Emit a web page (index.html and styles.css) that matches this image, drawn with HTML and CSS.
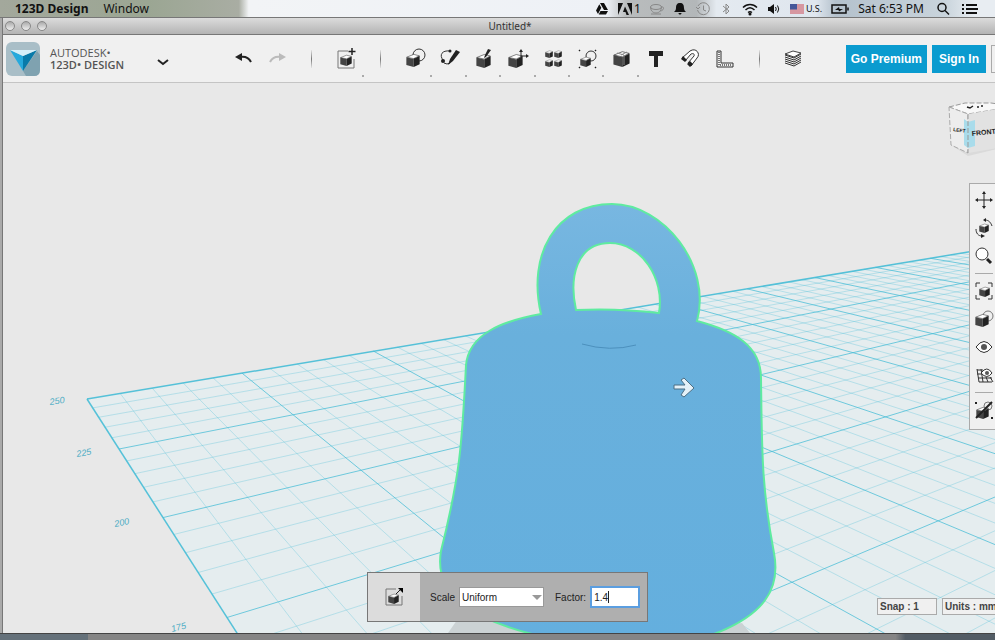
FILE: index.html
```html
<!DOCTYPE html>
<html lang="en">
  <head>
    <title>Untitled* - 123D Design</title>
    <meta charset="UTF-8" />
    <link rel="stylesheet" href="styles.css">
  </head>

  <body>
    <!-- shared shapes -->
    <svg class="defs" aria-hidden="true">
      <symbol id="cube" viewBox="0 0 20 20">
        <path d="M1 6 11 2l8 2-8 4z" fill="#fff" stroke="#333" stroke-width=".8"/>
        <path d="M.5 6 11 8.500V20L.5 17z" fill="#444"/>
        <path d="M11 8.500 19.500 4v12L11 20z" fill="#222"/>
      </symbol>
    </svg>

    <header class="menubar">
      <strong>123D Design</strong>
      <span>Window</span>
      <div class="status">
        <svg viewBox="0 0 14 14"><path d="M5 1h4l4 7h-4zM4.300 2.300l2 3.500L3 12 1 8.500zM5.500 9H13l-2 3.500H3.700z"/></svg>
        <span class="adobe"><svg viewBox="0 0 14 14"><path d="M0 1h5L0 13zM9 1h5v12zM7 4.500l4 8.500H8.500l-1-3H5z"/></svg>1</span>
        <svg viewBox="0 0 14 14" class="dim"><ellipse cx="6" cy="5" rx="5.500" ry="2.500"/><path d="M.5 5c0 3 2 6 5.500 6s5.500-3 5.500-6M11 5c4-1 3 4-1 4M1 12h10"/></svg>
        <svg viewBox="0 0 14 14"><path d="M7 1c3 0 4 2 4 5 0 2 1 3 2 4H1c1-1 2-2 2-4 0-3 1-5 4-5zM5.500 11h3c0 2-3 2-3 0z"/></svg>
        <svg viewBox="0 0 14 14" class="dim"><path d="M2 4a6 6 0 1 1-.5 4M0 5l2 2 2-2M7.500 3.500V8l2.500 1"/></svg>
        <svg viewBox="0 0 14 14" class="dim"><path d="M4 4l6 5-3 3V2l3 3-6 5"/></svg>
        <svg viewBox="0 0 16 14" class="wide line"><path d="M1 5.500c4-4 10-4 14 0M3.500 8c3-3 6-3 9 0M6 10.500c1.500-1 2.500-1 4 0"/><circle cx="8" cy="12" r=".8"/></svg>
        <svg viewBox="0 0 14 14"><path d="M1 5h2l4-3v10L3 9H1z"/><path d="M8.500 5q1.500 2 0 4M10.500 3.500q2.500 3.500 0 7" fill="none" stroke="#111"/></svg>
        <span class="lang"><svg viewBox="0 0 14 10"><path d="M0 0h14v10H0z" fill="#e9d9dc"/><path d="M0 1h14M0 3h14M0 5h14M0 7h14M0 9h14" stroke="#c45766"/><path d="M0 0h7v5.500H0z" fill="#46589a"/></svg>U.S.</span>
        <svg viewBox="0 0 18 14" class="battery line"><path d="M1 3h14v8H1zM17 5.500v3"/><path d="M4 8l4-3 .5 2H12L8 9.500 7.500 8z" fill="#111" stroke="none"/></svg>
        <time>Sat 6:53 PM</time>
        <svg viewBox="0 0 14 14" class="line search"><circle cx="6" cy="5.500" r="4"/><path d="M9 8.500l4 4"/></svg>
        <svg viewBox="0 0 16 14" class="wide"><path d="M0 2h2v2H0zM0 6h2v2H0zM0 10h2v2H0zM4 2h11v2H4zM4 6h12v2H4zM4 10h11v2H4z"/></svg>
      </div>
    </header>

    <main class="window">
      <div class="titlebar">
        <div class="lights"><i></i><i></i><i></i></div>
        <h1>Untitled*</h1>
      </div>

      <nav class="toolbar">
        <div class="brand">
          <svg class="logo" viewBox="0 0 34 34">
            <rect width="34" height="34" rx="6" fill="#a9bec7"/>
            <path d="M31 9l3 4v15q0 6-6 6H20l-3-5z" fill="#7fa2b0"/>
            <path d="M4 8l13 6v15z" fill="#26a9dc"/>
            <path d="M31 8l-14 6v15z" fill="#087aa9"/>
            <path d="M4 8h27l-14 6z" fill="#d5eff9"/>
          </svg>
          <div class="name"><span>AUTODESK•</span><b>123D• DESIGN</b></div>
          <button class="tool" aria-label="Menu"><svg viewBox="0 0 24 24"><path d="M7 13l5 4 5-4" class="thick"/></svg></button>
        </div>

        <div class="tools">
          <button class="tool" aria-label="Undo"><svg viewBox="0 0 24 24"><path d="M4 10l7-4v8z"/><path d="M9 10c6-1 9 1 11 5" class="thick"/></svg></button>
          <button class="tool faded" aria-label="Redo"><svg viewBox="0 0 24 24"><path d="M20 10l-7-4v8z"/><path d="M15 10c-6-1-9 1-11 5" class="thick"/></svg></button>
          <i class="sep"></i>
          <button class="tool more" aria-label="Transform"><svg viewBox="0 0 24 24"><path d="M14 4H4v17h16V12" class="thin"/><use href="#cube" x="6" y="7" width="12" height="12"/><path d="M18 1v7M14.500 4.500h7" stroke="#222" stroke-width="1.500"/></svg></button>
          <i class="sep"></i>
          <button class="tool more" aria-label="Primitives"><svg viewBox="0 0 24 24"><circle cx="16" cy="8" r="6" class="thin dark"/><use href="#cube" x="3" y="6" width="14" height="14"/></svg></button>
          <button class="tool more" aria-label="Sketch"><svg viewBox="0 0 24 24"><path d="M5 13C1 8 4 3 12 4M6 16q3 2 6 0" class="thin dark"/><circle cx="5" cy="14" r="2"/><circle cx="12" cy="4" r="1.500"/><path d="M18 3l4 2-7 9-5 4 2-6z"/></svg></button>
          <button class="tool more" aria-label="Construct"><svg viewBox="0 0 24 24"><use href="#cube" x="4" y="6" width="15" height="15"/><path d="M16 2l3 1-5 7-2 1 1-3z"/></svg></button>
          <button class="tool more" aria-label="Modify"><svg viewBox="0 0 24 24"><use href="#cube" x="2" y="6" width="15" height="15"/><path d="M15 10V4M15 9h6" stroke="#222"/><path d="M13 5l2-3 2 3zM20 7l3 2-3 2z"/></svg></button>
          <button class="tool more" aria-label="Pattern"><svg viewBox="0 0 24 24"><use href="#cube" x="4" y="3" width="8" height="8"/><use href="#cube" x="13" y="3" width="8" height="8"/><use href="#cube" x="4" y="12" width="8" height="8"/><use href="#cube" x="13" y="12" width="8" height="8"/></svg></button>
          <button class="tool more" aria-label="Grouping"><svg viewBox="0 0 24 24"><circle cx="16" cy="9" r="5" class="thin dark"/><use href="#cube" x="5" y="9" width="11" height="11"/><path d="M4 3h1v1H4zM20 3h1v1h-1zM4 20h1v1H4zM20 20h1v1h-1z" stroke="#222" stroke-width=".5"/></svg></button>
          <button class="tool more" aria-label="Combine"><svg viewBox="0 0 24 24"><use href="#cube" x="4" y="3" width="17" height="17"/><path d="M8 6l7 2v10M12 8l6-3" stroke="#888" fill="none"/></svg></button>
          <button class="tool" aria-label="Text"><svg viewBox="0 0 24 24"><path d="M5 4h14v5h-5v11h-4V9H5z"/></svg></button>
          <button class="tool" aria-label="Snap"><svg viewBox="0 0 24 24"><path d="M4 11l8-7c6-4 11 3 7 7l-6 8-3-3 6-7c1-2-1-3-3-2l-6 7z" fill="#fff" stroke="#333"/><path d="M5 9l4 4-2 2-4-3zM12 14l3 3-3 3-3-3z"/></svg></button>
          <button class="tool" aria-label="Measure"><svg viewBox="0 0 24 24"><path d="M4 4h4v12h12v4H4z" class="thin dark"/><path d="M6 5v13h13" class="ticks"/></svg></button>
          <i class="sep"></i>
          <button class="tool" aria-label="Materials"><svg viewBox="0 0 24 24"><path d="M4 7l8-3 8 2-7 4z" fill="#fff" stroke="#444"/><path d="M4 8l9 3 7-4M4 10l9 3 7-4M4 12l9 3 7-4M4 14l9 3 7-4M4 16l9 3 7-4" fill="none" stroke="#333"/></svg></button>
        </div>

        <div class="account">
          <button>Go Premium</button>
          <button>Sign In</button>
          <i></i>
        </div>
      </nav>

      <section class="viewport">
        <svg class="scene" viewBox="3 83 992 550" preserveAspectRatio="xMinYMin slice">
          <defs>
            <linearGradient id="skin" x1="0" y1="0" x2="0" y2="1">
              <stop offset="0" stop-color="#78b7e1"/>
              <stop offset=".3" stop-color="#69b0dc"/>
              <stop offset="1" stop-color="#64afde"/>
            </linearGradient>
          </defs>
          <path d="M87 399L995 248V633H237z" fill="#e5edef"/>
          <g id="grid"></g>
          <path d="M448 633l14-20 80 20zM700 633l42-10 8 10z" fill="#cbd2d4"/>
          <path class="weight" fill-rule="evenodd" d="M541 314C527 254 556 204 612 204C664 204 712 266 697 321C735 331 761 346 761 378C762 445 761 485 774 553C781 590 763 615 714 634L714 640H545L532 634C477 620 433 597 441 551C460 475 462 445 466 365C469 334 502 321 541 314zM576 310C569 278 576 243 610 243C641 243 665 278 659 313Q617 308 576 310z"/>
          <path d="M582 344q28 8 54 1" fill="none" stroke="#4c90bd"/>
          <path d="M674 385h11l-4-5 3-2 10 10-10 9-3-2 4-6h-11z" fill="#e4f1f8" stroke="#4d6f84"/>
          <g class="ruler">
            <text transform="translate(50 405) rotate(-8)">250</text>
            <text transform="translate(77 457) rotate(-10)">225</text>
            <text transform="translate(115 527) rotate(-12)">200</text>
            <text transform="translate(172 632) rotate(-14)">175</text>
          </g>
        </svg>

        <svg class="viewcube" viewBox="0 0 60 64">
          <path d="M6 47l17 11 37-9v-6z" fill="#dadada"/>
          <path d="M4 9l16-4h26l14 2v3l-37 6z" fill="#f8f8f8" stroke="#999" stroke-dasharray="5 2"/>
          <path d="M4 9l19 7v39L6 47z" fill="#ededed" stroke="#aaa" stroke-dasharray="5 2"/>
          <path d="M23 16l37-6v39l-37 6z" fill="#e2e2e2"/>
          <path d="M19 21l4 3 7-2v26l-7 2-4-3z" fill="#a9dceb"/>
          <path d="M23 16v39" stroke="#999" stroke-dasharray="5 2"/>
          <text x="8" y="33" transform="rotate(8 8 33)" class="side">LEFT</text>
          <text x="27" y="38" transform="rotate(-6 27 38)">FRONT</text>
          <path d="M22 9l3 1 3-2M32 9h2M36 8h2" stroke="#222" fill="none" stroke-width="1.500"/>
        </svg>

        <aside class="viewtools">
          <button aria-label="Pan"><svg viewBox="0 0 20 20"><path d="M10 3v14M3 10h14" stroke="#222"/><path d="M8 4l2-3 2 3zM8 16l2 3 2-3zM4 8l-3 2 3 2zM16 8l3 2-3 2z"/></svg></button>
          <button aria-label="Orbit"><svg viewBox="0 0 20 20"><use href="#cube" x="5" y="5" width="10" height="10"/><path d="M11 2c4 0 6 3 7 6M8 18c-4 0-6-3-6-7" class="thin dark"/><path d="M12 0v4L9 2zM7 16v4l4-2z"/></svg></button>
          <button aria-label="Zoom"><svg viewBox="0 0 20 20"><circle cx="8" cy="8" r="6" fill="#fff" stroke="#333"/><path d="M13 13l4 4" stroke="#222" stroke-width="3"/></svg></button>
          <hr>
          <button aria-label="Fit"><svg viewBox="0 0 20 20"><use href="#cube" x="5" y="5" width="11" height="11"/><path d="M2 6V2h4M14 2h4v4M2 14v4h4M14 18h4v-4" class="thin dark"/></svg></button>
          <button aria-label="Shading"><svg viewBox="0 0 20 20"><circle cx="14" cy="7" r="5" class="thin"/><use href="#cube" x="1" y="4" width="14" height="14"/></svg></button>
          <button aria-label="Visibility"><svg viewBox="0 0 20 20"><path d="M2 10q8-11 16 0-8 11-16 0z" fill="#fff" stroke="#333"/><circle cx="10" cy="10" r="3" fill="#555"/></svg></button>
          <button aria-label="Grid visibility"><svg viewBox="0 0 20 20"><path d="M3 5h6M3 9h6M4 13h14M5 17h13M3 4l2 13M7 4l2 13M12 12l2 5M16 12l3 5" class="thin dark"/><path d="M7 8q6-8 11 0-5 7-11 0z" fill="#fff" stroke="#333"/><circle cx="13" cy="8" r="2" fill="#555"/></svg></button>
          <hr>
          <button aria-label="Snap while grouping"><svg viewBox="0 0 20 20"><circle cx="14" cy="6" r="4" class="thin"/><use href="#cube" x="2" y="6" width="13" height="13"/><path d="M2 18L18 2" stroke="#222" stroke-width="2"/><path d="M1 2h2v2H1zM17 17h2v2h-2z"/></svg></button>
        </aside>

        <form class="scalebar">
          <div class="mode"><svg viewBox="0 0 24 24"><path d="M14 4H4v16h16V11" class="thin"/><use href="#cube" x="6" y="8" width="11" height="11"/><path d="M14 9l5-5" stroke="#222"/><path d="M16 3h5v5z"/></svg></div>
          <label for="scale">Scale</label>
          <span class="picker"><select id="scale"><option>Uniform</option><option>Non Uniform</option></select></span>
          <label for="factor">Factor:</label>
          <span class="field"><input id="factor" type="text" value="1.4"></span>
        </form>

        <div class="settings">
          <button>Snap : 1</button>
          <button>Units : mm</button>
        </div>
      </section>
    </main>
    <footer></footer>

    <script src="grid.js"></script>
  </body>
</html>
```
FILE: styles.css
```css
*{
    margin: 0;
    padding: 0;
    box-sizing: border-box;
}
body{
    display: flex;
    flex-direction: column;
    min-height: 100vh;
    overflow: hidden;
    background: #aaa;
    font-family: "Liberation Sans", Arial, sans-serif;
    color: #222;
}
button{
    border: 0;
    background: none;
    font-family: inherit;
    color: inherit;
}
svg{
    display: block;
}
.defs{
    position: absolute;
    width: 0;
    height: 0;
}
.thin{
    fill: none;
    stroke: #777;
}
.dark{
    stroke: #333;
}
.thick{
    fill: none;
    stroke: currentColor;
    stroke-width: 2;
}

/* system menu bar */
.menubar{
    display: flex;
    align-items: center;
    gap: 15px;
    height: 18px;
    padding: 0 17px 0 15px;
    border-bottom: 1px solid #777;
    background: linear-gradient(90deg, #a3a89c, #9ba693 15%, #a9ada3 24%, #f2f4f6 25%, #eef1f6 61%, #b9bcbd 63%, #b3b7b9 70%, #e4eaf0 72%, #dfe6ee 82%, #b4c1cc 84%, #c9d4dc 95%, #e8edf2 98%);
    font: 12px "Noto Sans", sans-serif;
    color: #111;
}
.status{
    display: flex;
    align-items: center;
    gap: 9px;
    margin-left: auto;
}
.status svg{
    width: 14px;
    height: 14px;
    fill: #111;
}
.status .wide{
    width: 16px;
}
.status .search{
    margin: 0 3px;
}
.status .battery{
    width: 18px;
}
.status .line{
    fill: none;
    stroke: #111;
    stroke-width: 1.5;
}
.status .dim{
    fill: none;
    stroke: #888;
}
.adobe, .lang{
    display: flex;
    align-items: center;
    gap: 2px;
}
.lang{
    font-size: 9px;
}
.lang svg{
    height: 10px;
}

/* window frame */
.window{
    flex: 1;
    display: flex;
    flex-direction: column;
    margin-left: 2px;
    border-left: 1px solid #777;
}
.titlebar{
    display: grid;
    grid-template-columns: 1fr auto 1fr;
    align-items: center;
    height: 17px;
    padding-right: 2px;
    border-bottom: 1px solid #777;
    background: linear-gradient(#dcdcdc, #b4b4b4);
}
.titlebar h1{
    padding-left: 24px;
    font: 10px "Noto Sans", sans-serif;
    color: #333;
}
.lights{
    display: flex;
    gap: 6px;
    padding-left: 2px;
}
.lights i{
    width: 10px;
    height: 10px;
    border: 1px solid #888;
    border-radius: 50%;
    background: linear-gradient(#aaa, #eee);
}

/* toolbar */
.toolbar{
    display: flex;
    align-items: center;
    height: 48px;
    border-bottom: 1px solid #c4c4c4;
    background: #f0f0f0;
}
.brand{
    display: flex;
    align-items: center;
    width: 223px;
    padding-left: 3px;
}
.logo{
    width: 34px;
    height: 34px;
    margin-right: 10px;
}
.name{
    display: flex;
    flex-direction: column;
    width: 101px;
    font: 11px/12px "Open Sans", sans-serif;
    color: #555;
    white-space: nowrap;
}
.name b{
    font-weight: 600;
}
.tools{
    flex: 1;
    display: grid;
    grid-template-columns: repeat(17, 1fr);
    align-items: center;
}
.tool{
    position: relative;
    display: flex;
    justify-content: center;
    align-items: center;
    height: 40px;
}
.tool svg{
    width: 24px;
    height: 24px;
    fill: #222;
}
.faded{
    color: #bbb;
}
.faded svg{
    fill: #bbb;
}
.more::after{
    content: '';
    position: absolute;
    right: 0;
    bottom: 2px;
    width: 2px;
    height: 2px;
    background: #aaa;
}
.ticks{
    fill: none;
    stroke: #777;
    stroke-width: 2;
    stroke-dasharray: 1 1;
}
.sep{
    justify-self: center;
    width: 1px;
    height: 18px;
    background: linear-gradient(#e4e4e4, #777, #e4e4e4);
}
.account{
    display: flex;
    gap: 5px;
    margin-left: 35px;
}
.account button{
    height: 28px;
    padding: 0 5px;
    background: #0a9bcf;
    font-size: 12px;
    font-weight: bold;
    color: #fff;
}
.account button:nth-child(2){
    padding: 0 7px;
}
.account i{
    width: 4px;
    border: 1px solid #aaa;
    border-right: 0;
}

/* 3d view */
.viewport{
    flex: 1;
    position: relative;
    overflow: hidden;
    background: #e8e8e8;
}
.scene{
    position: absolute;
    width: 100%;
    height: 100%;
}
#grid path{
    fill: none;
    stroke: #45bcd6;
}
#grid .minor{
    stroke-opacity: .3;
}
#grid .major{
    stroke-opacity: .75;
}
#grid .edge{
    stroke-width: 1.5;
    stroke-opacity: .9;
}
.weight{
    fill: url(#skin);
    stroke: #5feba0;
    stroke-width: 2;
}
.ruler text{
    font: italic 9px "Liberation Sans", sans-serif;
    fill: #4cacc4;
}
.viewcube{
    position: absolute;
    top: 15px;
    right: -10px;
    width: 60px;
    height: 64px;
}
.viewcube text{
    font: bold 7px "Liberation Sans", sans-serif;
    fill: #222;
}
.viewcube .side{
    font-size: 5px;
}
.viewtools{
    position: absolute;
    top: 100px;
    right: -4px;
    width: 30px;
    padding: 2px 0 5px;
    border: 1px solid #aaa;
    background: #f0f0f0;
}
.viewtools button{
    display: flex;
    justify-content: center;
    align-items: center;
    width: 28px;
    height: 28px;
}
.viewtools svg{
    width: 20px;
    height: 20px;
    fill: #222;
}
.viewtools hr{
    height: 1px;
    margin: 3px 5px;
    border: 0;
    background: #aaa;
}

/* scale options */
.scalebar{
    position: absolute;
    left: 50%;
    bottom: 11px;
    display: flex;
    align-items: center;
    height: 50px;
    padding-right: 7px;
    border: 1px solid #777;
    background: #afafaf;
    font-size: 10px;
    transform: translateX(-132px);
}
.mode{
    display: flex;
    justify-content: center;
    align-items: center;
    width: 52px;
    height: 100%;
    margin-right: 10px;
    background: #dcdcdc;
}
.mode svg{
    width: 24px;
    height: 24px;
}
.picker, .field{
    position: relative;
    margin-left: 4px;
}
.picker{
    margin-right: 11px;
}
.picker select, .field input{
    display: block;
    height: 20px;
    padding: 0 2px;
    border: 1px solid #999;
    background: #fff;
    font: 10px "Liberation Sans", Arial, sans-serif;
    color: #222;
}
.picker select{
    width: 85px;
    appearance: none;
}
.picker::after{
    content: '';
    position: absolute;
    top: 8px;
    right: 2px;
    border: 5px solid transparent;
    border-top-color: #999;
}
.field input{
    width: 50px;
    height: 22px;
    border: 2px solid #5b9ee0;
}
.field::after{
    content: '';
    position: absolute;
    top: 5px;
    left: 18px;
    width: 1px;
    height: 12px;
    background: #222;
}

.settings{
    position: absolute;
    right: -11px;
    bottom: 18px;
    display: flex;
    gap: 5px;
}
.settings button{
    width: 60px;
    height: 17px;
    padding-left: 2px;
    border: 1px solid #aaa;
    background: #f0f0f0;
    font-size: 10px;
    font-weight: bold;
    text-align: left;
    white-space: nowrap;
    color: #444;
}
.settings button:last-child{
    width: 64px;
}
footer{
    height: 7px;
    border-top: 1px solid #444;
    background: linear-gradient(90deg, #65717a 88px, #858585 88px, #858585 90%, #525c65 91%);
}
```
FILE: grid.js
```js
const grid = document.getElementById("grid");

// perspective projection of the work plane, one unit = one major square
function project(u, v) {
    const w = 1 - 0.1355 * u + 0.0891 * v;
    return [(87 + 15.91 * u + 176.6 * v) / w, (399 - 10.84 * u + 7.38 * v) / w];
}

function addLine(from, to, type) {
    const path = document.createElementNS("http://www.w3.org/2000/svg", "path");
    path.setAttribute("d", "M" + from.join(" ") + "L" + to.join(" "));
    path.setAttribute("class", type);
    grid.appendChild(path);
}

function lineType(i) {
    if (i === 0) return "edge";
    return i % 5 === 0 ? "major" : "minor";
}

for (let i = 0; i <= 40; i++) {
    const u = i / 5;
    // skip the part that lies behind the camera
    const start = Math.max(0, (0.1355 * u - 0.9) / 0.0891);
    addLine(project(u, start), project(u, 20), lineType(i));
}
for (let i = 0; i <= 80; i++) {
    const v = i / 5;
    const end = Math.min(10, (0.9 + 0.0891 * v) / 0.1355);
    addLine(project(0, v), project(end, v), lineType(i));
}
```
